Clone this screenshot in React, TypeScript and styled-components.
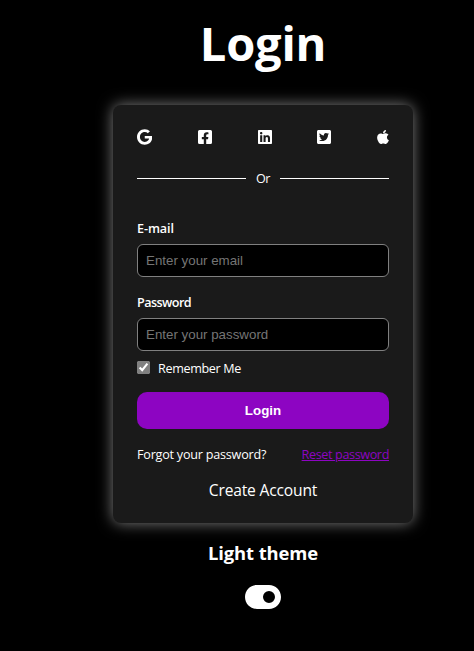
import React from "react";
import styled, { createGlobalStyle } from "styled-components";
import {
  FaGoogle,
  FaFacebookSquare,
  FaLinkedin,
  FaTwitterSquare,
  FaApple,
} from "react-icons/fa";
import { FaToggleOn } from "react-icons/fa6";

const GlobalStyle = createGlobalStyle`
  * { box-sizing: border-box; }
  body {
    margin: 0;
    background: #000;
    color: #fff;
    font-family: "Segoe UI", "Open Sans", "Noto Sans", sans-serif;
    overflow: hidden;
  }
`;

const Page = styled.main`
  display: flex;
  flex-direction: column;
  align-items: center;
  width: 474px;
  height: 651px;
  padding: 11px 0 0 52px;
`;

const Title = styled.h1`
  margin: 0 0 30px;
  font-size: 47px;
  line-height: 64px;
  font-weight: 700;
  letter-spacing: -0.2px;
`;

const Card = styled.section`
  display: flex;
  flex-direction: column;
  width: 300px;
  height: 418px;
  padding: 24px;
  border-radius: 8px;
  background: #1a1a1a;
  box-shadow: 0 0 15px 0 #808080;
  & > * { flex-shrink: 0; }
`;

const Socials = styled.nav`
  display: flex;
  justify-content: space-between;
  height: 16px;
`;

const SocialIcon = styled.span<{ $width: number }>`
  display: flex;
  flex: none;
  width: ${(p) => p.$width}px;
  height: 16px;
  svg { display: block; width: 100%; height: 100%; }
`;

const Divider = styled.div`
  display: flex;
  align-items: center;
  gap: 10px;
  height: 18px;
  margin-top: 24px;
  font-size: 12.6px;
  line-height: 18px;
  letter-spacing: -0.4px;
  span { padding-top: 2px; }
  &::before, &::after {
    content: "";
    flex: 1;
    height: 1px;
    background: #fff;
  }
`;

const Field = styled.div<{ $top: number }>`
  display: flex;
  flex-direction: column;
  gap: 6px;
  margin-top: ${(p) => p.$top}px;
`;

const Label = styled.label<{ $spacing: number }>`
  font-size: 12.6px;
  font-weight: 600;
  line-height: 18px;
  letter-spacing: ${(p) => p.$spacing}px;
`;

const Input = styled.input`
  width: 100%;
  height: 33px;
  padding: 0 8px;
  border: 1px solid #808080;
  border-radius: 6px;
  outline: none;
  background: #000;
  color: #fff;
  font: 13.333px "Liberation Sans", Arial, sans-serif;
  &::placeholder { color: #757575; }
`;

const Remember = styled.label`
  display: flex;
  align-items: center;
  gap: 8px;
  height: 18px;
  margin-top: 8px;
  font-size: 12.6px;
  letter-spacing: -0.35px;
`;

const Checkbox = styled.input`
  width: 13px;
  height: 13px;
  margin: 0 0 2px;
  accent-color: #808080;
`;

const Submit = styled.button`
  height: 37px;
  margin-top: 15px;
  border: 0;
  border-radius: 10px;
  background: #8d05c2;
  color: #fff;
  font: 700 13.333px "Liberation Sans", Arial, sans-serif;
`;

const Recovery = styled.div`
  display: flex;
  justify-content: space-between;
  margin-top: 17px;
  font-size: 12.6px;
  line-height: 18px;
  letter-spacing: -0.22px;
`;

const ResetLink = styled.a`
  color: #8d05c2;
  text-decoration: underline;
  letter-spacing: -0.37px;
`;

const CreateAccount = styled.a`
  margin-top: 15px;
  text-align: center;
  font-size: 15.6px;
  line-height: 22px;
  letter-spacing: -0.18px;
`;

const ThemeTitle = styled.h2`
  margin: 17px 0 16px;
  font-size: 18.4px;
  line-height: 25px;
  font-weight: 700;
  letter-spacing: -0.1px;
`;

const ThemeToggle = styled.span`
  display: flex;
  height: 32px;
  svg { display: block; width: 36px; height: 32px; }
`;

const socials = [
  { Icon: FaGoogle, width: 15.25 },
  { Icon: FaFacebookSquare, width: 14 },
  { Icon: FaLinkedin, width: 14 },
  { Icon: FaTwitterSquare, width: 14 },
  { Icon: FaApple, width: 12 },
];

export default function App() {
  return (
    <>
      <GlobalStyle />
      <Page>
        <Title>Login</Title>
        <Card>
          <Socials>
            {socials.map(({ Icon, width }, i) => (
              <SocialIcon key={i} $width={width}>
                <Icon />
              </SocialIcon>
            ))}
          </Socials>
          <Divider>
            <span>Or</span>
          </Divider>
          <Field $top={33}>
            <Label htmlFor="email" $spacing={-0.1}>E-mail</Label>
            <Input id="email" type="email" placeholder="Enter your email" />
          </Field>
          <Field $top={17}>
            <Label htmlFor="password" $spacing={-0.55}>Password</Label>
            <Input id="password" type="password" placeholder="Enter your password" />
          </Field>
          <Remember>
            <Checkbox type="checkbox" defaultChecked />
            Remember Me
          </Remember>
          <Submit type="button">Login</Submit>
          <Recovery>
            <span>Forgot your password?</span>
            <ResetLink>Reset password</ResetLink>
          </Recovery>
          <CreateAccount>Create Account</CreateAccount>
        </Card>
        <ThemeTitle>Light theme</ThemeTitle>
        <ThemeToggle>
          <FaToggleOn />
        </ThemeToggle>
      </Page>
    </>
  );
}
